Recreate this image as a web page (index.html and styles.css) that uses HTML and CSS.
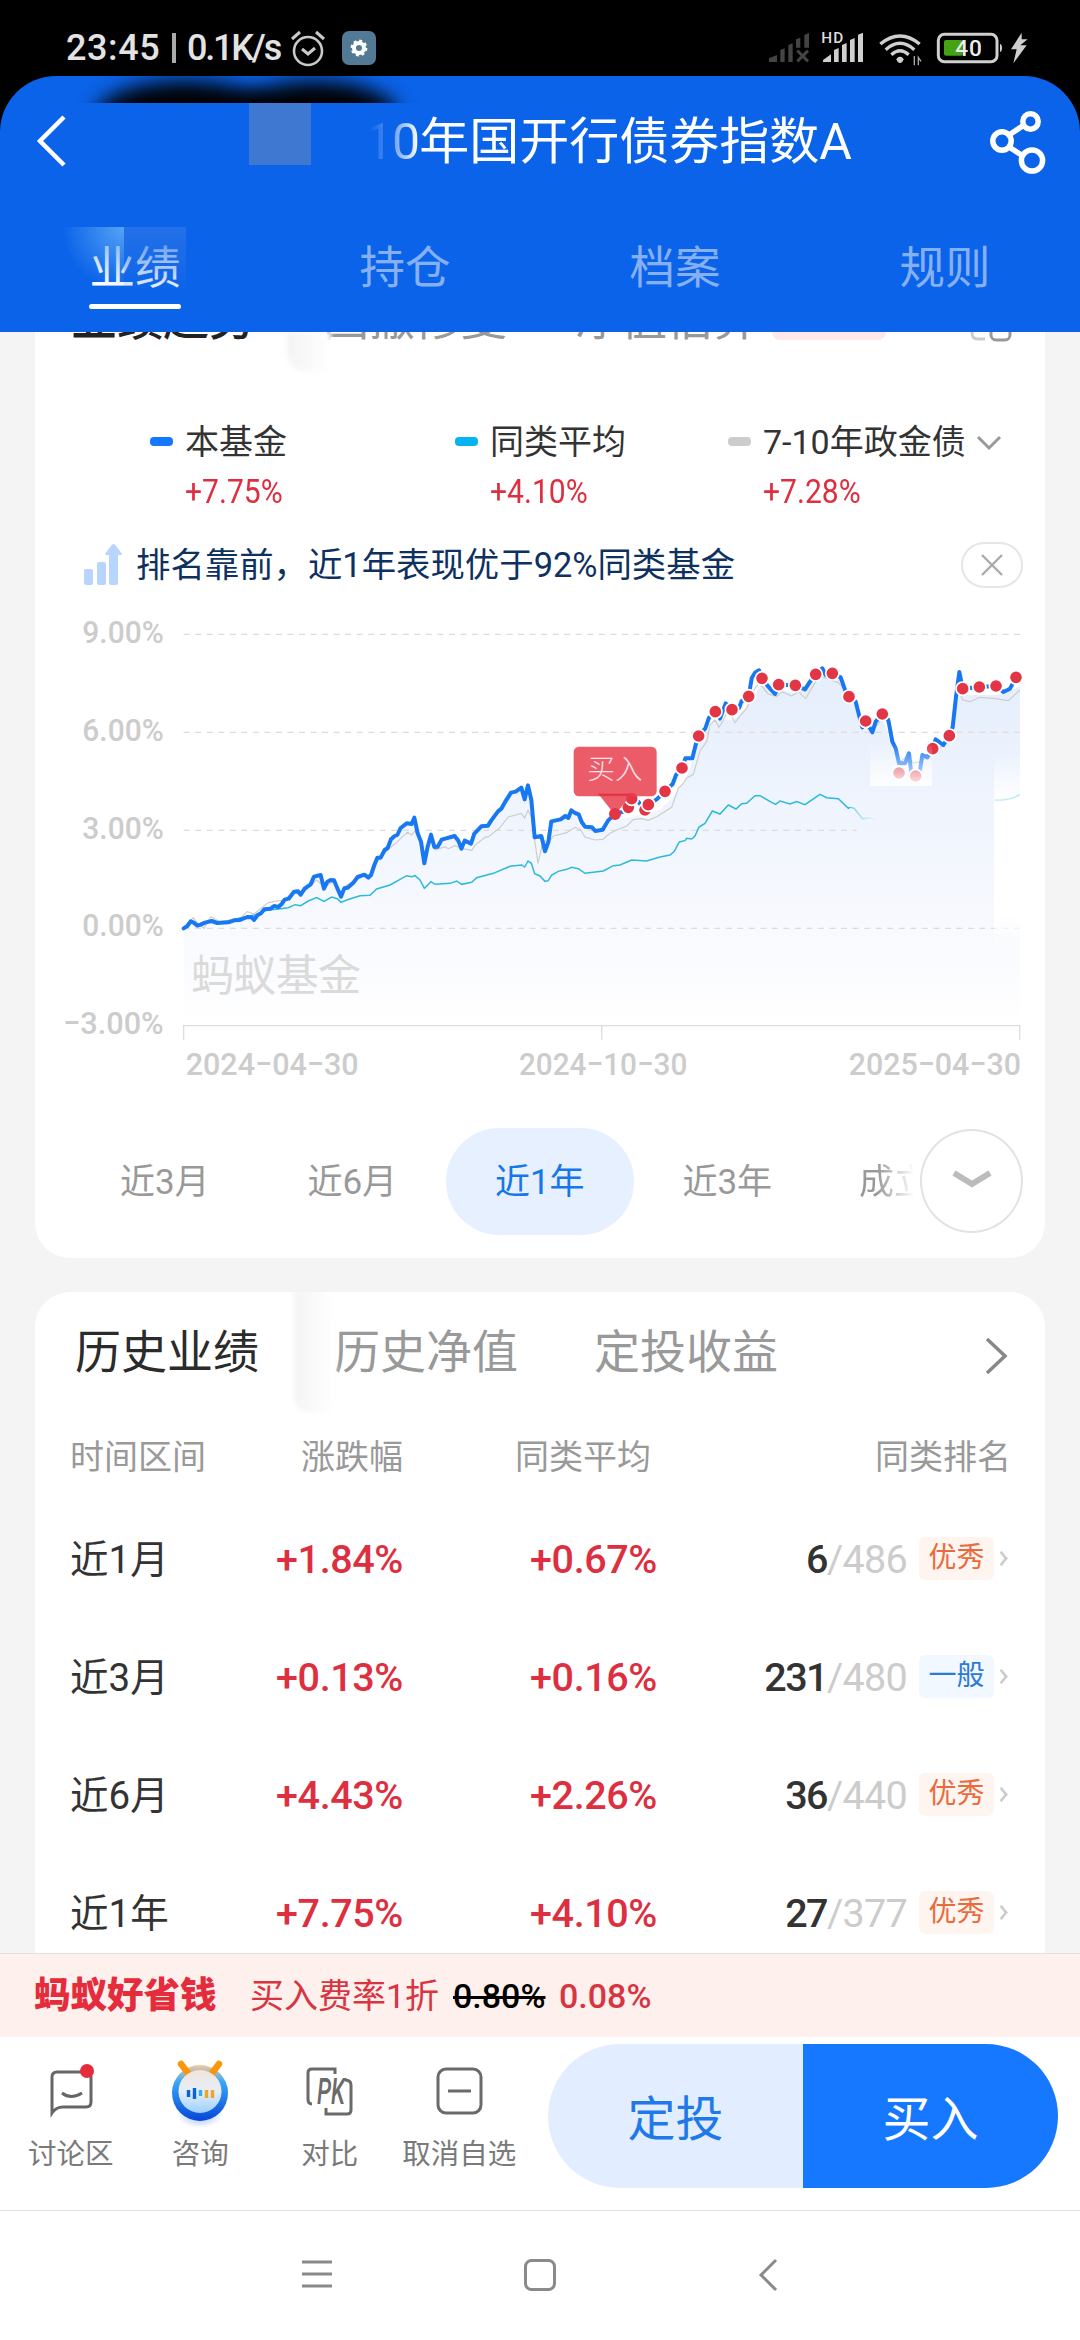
FILE: index.html
```html
<!DOCTYPE html>
<html lang="zh-CN">
<head>
<meta charset="utf-8">
<title>基金业绩</title>
<link rel="stylesheet" href="styles.css">
</head>
<body>
<div class="phone">
  <div class="status">
    <span class="clock">23:45</span><span class="bar"></span><span class="speed">0.1K/s</span>
    <svg class="alarm" width="36" height="38" viewBox="0 0 36 38" fill="none" stroke="#c9c9c9" stroke-width="2.6"><circle cx="18" cy="21" r="14"/><path d="M12 19l6 5 7-6M2 9l8-7M34 9l-8-7" stroke-width="3"/></svg>
    <svg class="gear" width="34" height="34" viewBox="0 0 34 34"><rect width="34" height="34" rx="7" fill="#527a94"/><circle cx="17" cy="17" r="5" fill="none" stroke="#fff" stroke-width="4"/><circle cx="17" cy="17" r="7.2" fill="none" stroke="#fff" stroke-width="2.4" stroke-dasharray="2.9 2.75"/></svg>
    <svg class="signals" width="280" height="46" viewBox="0 0 840 138">
      <g fill="#444"><path d="M48 115l24-10v21H48zM82 90l13-5v41H82zM106 75l13-5v56h-13zM129 58l13-5v30h-13zM154 45l14-6v44h-14z"/><path d="M133 92l32 32M165 92l-32 32" stroke="#444" stroke-width="9"/></g>
      <g fill="#cfcfcf"><path d="M210 120l24-17v23h-24zM243 90l14-6v42h-14zM267 75l14-6v57h-14zM291 60l14-6v72h-14zM315 44l15-6v88h-15z"/><path d="M429 118l12-8 12 8-12 12z"/><circle cx="441" cy="119" r="9"/></g>
      <text x="205" y="68" class="hd" textLength="66">HD</text>
      <g fill="none" stroke="#cfcfcf" stroke-width="10"><path d="M382 72q59-48 118 0M398 89q43-38 86 0M415 104q26-24 52 0"/></g>
      <path d="M484 108v28M496 136v-24l8 12" stroke="#aaa" stroke-width="4" fill="none"/>
      <rect x="556" y="43" width="176" height="82" rx="18" fill="none" stroke="#cfcfcf" stroke-width="9"/>
      <rect x="573" y="60" width="56" height="47" rx="6" fill="#45a215"/>
      <path d="M741 72q6 1 6 12t-6 12z" fill="#cfcfcf"/>
      <text x="607" y="107" class="batt" textLength="80">40</text>
      <path d="M806 38l-32 50h17l-10 42 40-54h-19l22-18h-18z" fill="#cfcfcf"/>
    </svg>
  </div>

  <header class="header">
    <div class="smear"><i></i><i></i></div>
    <i class="block"></i>
    <div class="titlebar">
      <svg class="back" width="34" height="52" viewBox="0 0 34 52" fill="none" stroke="#fff" stroke-width="4.5"><path d="M30 2L6 26l24 24"/></svg>
      <h1><span class="fade">10</span>年国开行债券指数A</h1>
      <svg class="share" width="60" height="66" viewBox="0 0 60 66" fill="none" stroke="#fff" stroke-width="5.5"><circle cx="42.500" cy="11.500" r="7.700"/><circle cx="14" cy="31" r="9.200"/><circle cx="44" cy="50.500" r="10.600"/><path d="M21 25l15-10M21 37l14 9"/></svg>
    </div>
    <nav class="tabs">
      <a class="on">业绩</a><a class="half">持仓</a><a>档案</a><a>规则</a>
    </nav>
    <i class="patch"></i>
  </header>

  <main class="content">
    <section class="card trend">
      <div class="cut"><b>业绩趋势</b><span>回撤修复</span><span>净值估算</span><i></i>
        <svg width="46" height="30" viewBox="0 0 46 30" fill="none" stroke-width="3"><path d="M4 2v19q0 6 6 6h7" stroke="#ccc"/><rect x="23" y="5" width="19" height="23" rx="5" stroke="#999"/></svg>
      </div>
      <div class="smudge"></div>
      <div class="legend">
        <div class="item"><i class="blue"></i><span>本基金</span><em>+7.75%</em></div>
        <div class="item"><i class="cyan"></i><span>同类平均</span><em>+4.10%</em></div>
        <div class="item"><i class="grey"></i><span>7-10年政金债<svg width="26" height="16" viewBox="0 0 26 16" fill="none" stroke="#999" stroke-width="3"><path d="M2 2l11 11L24 2"/></svg></span><em>+7.28%</em></div>
      </div>
      <div class="notice">
        <svg width="40" height="42" viewBox="0 0 40 42" fill="#b7d5ff"><rect x="1" y="25" width="9" height="16" rx="2"/><rect x="14" y="18" width="9" height="23" rx="2"/><path d="M31 0q1 0 8 10 0 1-1 1h-3v28q0 2-2 2h-5q-2 0-2-2V11h-3q-1 0-1-1 7-10 8-10z"/></svg>
        <p>排名靠前，近1年表现优于92%同类基金</p>
        <span class="close"><svg width="22" height="22" viewBox="0 0 22 22" stroke="#aaa" stroke-width="2.4"><path d="M1 1l20 20M21 1L1 21"/></svg></span>
      </div>
      <svg class="chart" viewBox="-375 -60 3030 1440">
        <defs>
          <linearGradient id="area" x1="0" y1="150" x2="0" y2="1217" gradientUnits="userSpaceOnUse"><stop offset="0" stop-color="#e5eefd"/><stop offset=".3" stop-color="#edf3fd"/><stop offset=".7" stop-color="#f7f9fe"/><stop offset="1" stop-color="#fff"/></linearGradient>
          <linearGradient id="cyanfade" x1="2030" x2="2150" y1="0" y2="0" gradientUnits="userSpaceOnUse"><stop offset="0" stop-color="#2bb9dc"/><stop offset="1" stop-color="#2bb9dc" stop-opacity="0"/></linearGradient>
          <linearGradient id="haze" x1="0" y1="0" x2="0" y2="1"><stop offset="0" stop-color="#fff" stop-opacity="0"/><stop offset=".55" stop-color="#fff" stop-opacity=".5"/><stop offset="1" stop-color="#fff" stop-opacity=".9"/></linearGradient>
          <linearGradient id="edge" x1="0" y1="0" x2="0" y2="1"><stop offset="0" stop-color="#fff" stop-opacity="0"/><stop offset=".25" stop-color="#fff"/><stop offset=".8" stop-color="#fff"/><stop offset="1" stop-color="#fff" stop-opacity="0"/></linearGradient>
        </defs>
        <path fill="url(#area)" d="M71 925 92 904 112 917 155 903 205 907 262 891 303 880 365 852 402 815 462 770 482 765 492 806 522 781 543 830 613 764 633 765 652 713 693 658 740 610 763 593 793 730 813 644 833 680 884 648 904 686 933 671 964 619 1014 574 1053 518 1104 496 1124 652 1155 694 1174 604 1234 571 1265 606 1306 633 1365 600 1420 590 1500 570 1540 530 1580 470 1616 370 1666 300 1720 300 1766 255 1806 190 1900 220 1985 165 2042 175 2117 320 2167 290 2217 440 2270 460 2300 410 2368 350 2398 200 2410 225 2510 225 2580 200V1217H71z"/>
        <g stroke="#dcdcdc" stroke-width="3.500" stroke-dasharray="18 16.600"><path d="M71 43H2580M71 337H2580M71 631H2090M71 925H2580"/></g>
        <path d="M71 1259V1217H2579V1259M1325 1217v42" fill="none" stroke="#ddd" stroke-width="4"/>
        <text x="93" y="1112" class="water" textLength="510">蚂蚁基金</text>
        <g class="axis">
          <text x="-233" y="69" textLength="244" lengthAdjust="spacingAndGlyphs">9.00%</text>
          <text x="-233" y="362" textLength="244" lengthAdjust="spacingAndGlyphs">6.00%</text>
          <text x="-233" y="656" textLength="244" lengthAdjust="spacingAndGlyphs">3.00%</text>
          <text x="-233" y="949" textLength="244" lengthAdjust="spacingAndGlyphs">0.00%</text>
          <text x="-291" y="1243" textLength="302" lengthAdjust="spacingAndGlyphs">−3.00%</text>
          <text x="77" y="1365" textLength="519" lengthAdjust="spacingAndGlyphs">2024−04−30</text>
          <text x="1077" y="1365" textLength="505" lengthAdjust="spacingAndGlyphs">2024−10−30</text>
          <text x="2066" y="1365" textLength="517" lengthAdjust="spacingAndGlyphs">2025−04−30</text>
        </g>
        <polyline class="line-grey" points="71,925 100,893 115,912 132,925 152,890 180,905 240,895 262,875 282,882 325,848 370,840 402,818 422,824 470,780 492,800 520,785 543,820 560,795 610,768 633,765 655,716 683,690 712,665 742,637 755,645 765,632 783,668 793,720 805,680 815,660 825,690 855,680 865,686 885,677 905,685 935,691 945,676 975,652 985,650 1020,623 1045,591 1084,580 1094,594 1104,571 1114,590 1124,660 1134,730 1150,660 1165,670 1180,648 1220,638 1245,622 1262,630 1275,651 1305,660 1328,658 1350,640 1375,628 1400,618 1420,599 1445,596 1465,601 1490,590 1535,562 1555,505 1570,490 1580,474 1600,463 1620,393 1640,365 1650,315 1665,300 1677,322 1690,300 1705,270 1725,308 1745,282 1760,265 1785,205 1798,190 1825,222 1850,230 1865,215 1895,228 1915,215 1937,236 1970,180 1985,170 2035,188 2060,215 2090,250 2105,325 2120,310 2137,335 2170,290 2190,320 2215,430 2245,405 2260,430 2280,425 2300,415 2350,375 2372,345 2395,200 2408,240 2430,245 2460,232 2500,235 2545,242 2580,210"/>
        <polyline class="line-cyan" points="225,897 260,890 290,884 320,870 350,868 385,863 405,854 422,857 445,843 470,833 492,844 515,831 532,836 543,847 560,840 600,827 630,826 650,807 690,795 740,767 755,770 765,767 780,780 793,805 813,785 825,793 870,790 890,783 905,793 935,787 950,773 1000,760 1050,739 1085,735 1094,741 1104,723 1114,730 1124,761 1140,768 1155,784 1165,782 1175,765 1195,754 1220,748 1235,742 1255,746 1275,760 1330,753 1360,737 1380,735 1415,720 1460,723 1500,711 1530,705 1543,694 1558,666 1575,662 1580,655 1595,657 1605,648 1617,621 1635,610 1657,573 1680,582 1705,555 1728,567 1745,551 1760,550 1785,527 1800,527 1835,547 1847,553 1860,543 1890,552 1910,545 1935,554 1980,523 2000,533 2035,536 2065,565 2070,562"/>
        <path d="M2070 562l12 2 26 33 20-4 20 7 20-10" stroke="url(#cyanfade)" stroke-width="4" fill="none"/>
        <polyline class="line-blue" points="71,925 82,918 92,904 101,908 112,917 122,914 135,908 155,903 172,909 205,907 222,901 240,900 262,891 275,892 282,900 292,886 303,880 313,868 332,866 342,858 355,861 365,852 374,839 386,836 402,815 414,814 422,824 434,806 452,793 462,770 482,765 492,806 502,785 512,780 522,781 532,805 543,830 553,805 563,803 580,788 593,771 613,764 625,773 633,765 643,735 652,713 662,713 674,690 683,684 693,658 704,648 712,645 722,624 740,610 755,612 763,593 773,640 783,665 793,730 803,680 813,644 823,681 833,680 845,659 884,648 895,662 904,686 914,662 933,671 943,641 964,619 984,617 994,601 1014,574 1024,566 1034,548 1053,518 1067,515 1084,503 1094,538 1104,496 1114,540 1124,652 1144,648 1155,694 1165,666 1174,604 1202,598 1216,588 1225,594 1234,571 1245,579 1256,583 1265,606 1275,620 1296,622 1306,633 1328,629 1344,602 1365,582 1390,575 1405,562 1415,536 1435,545 1455,570 1465,554 1490,538 1515,514 1538,492 1548,465 1566,444 1576,415 1597,415 1607,375 1616,348 1636,325 1647,293 1666,275 1680,296 1697,250 1716,269 1737,265 1745,243 1757,240 1766,229 1775,175 1785,158 1797,151 1806,175 1825,200 1845,222 1856,194 1906,196 1935,208 1950,185 1967,163 1987,145 1997,165 2017,160 2042,172 2057,215 2067,230 2087,245 2097,285 2107,322 2117,303 2137,337 2147,305 2167,282 2185,300 2197,365 2207,385 2217,430 2235,430 2247,400 2255,468 2280,450 2287,405 2302,412 2318,386 2327,358 2350,375 2368,347 2378,322 2388,230 2398,156 2408,206 2458,201 2508,198 2530,216 2550,206 2568,172"/>
        <g class="buys"><circle cx="1405" cy="562" r="20"/><circle cx="1415" cy="536" r="20"/><circle cx="1455" cy="570" r="20"/><circle cx="1465" cy="554" r="20"/><circle cx="1515" cy="514" r="20"/><circle cx="1566" cy="444" r="20"/><circle cx="1616" cy="348" r="20"/><circle cx="1666" cy="275" r="20"/><circle cx="1716" cy="269" r="20"/><circle cx="1766" cy="229" r="20"/><circle cx="1806" cy="175" r="20"/><circle cx="1856" cy="194" r="20"/><circle cx="1906" cy="196" r="20"/><circle cx="1967" cy="163" r="20"/><circle cx="2017" cy="160" r="20"/><circle cx="2067" cy="230" r="20"/><circle cx="2117" cy="303" r="20"/><circle cx="2167" cy="282" r="20"/><circle cx="2217" cy="459" r="20"/><circle cx="2267" cy="468" r="20"/><circle cx="2318" cy="386" r="20"/><circle cx="2368" cy="347" r="20"/><circle cx="2408" cy="206" r="20"/><circle cx="2458" cy="201" r="20"/><circle cx="2508" cy="198" r="20"/><circle cx="2568" cy="172" r="20"/></g>
        <path fill="url(#haze)" d="M2130 370h186v128h-186z"/>
        <path fill="url(#edge)" d="M2502 400h80v600h-80z"/>
        <path d="M2505 540q45 3 75-17" stroke="#2bb9dc" stroke-opacity=".3" stroke-width="4" fill="none"/>
        <g fill="#e8404f" fill-opacity=".86"><rect x="1241" y="380" width="249" height="149" rx="16"/><path d="M1316 523h98l-49 62z"/></g>
        <circle class="first" cx="1365" cy="582" r="18"/>
        <path d="M1316 524h96" stroke="#e23040" stroke-width="5"/>
        <text x="1282" y="476" class="flag" textLength="166">买入</text>
      </svg>
      <div class="ranges">
        <a>近3月</a><a>近6月</a><a class="on">近1年</a><a>近3年</a><a class="dim">成立</a>
        <span class="more"><svg width="40" height="22" viewBox="0 0 40 22" fill="none" stroke="#bbb" stroke-width="6"><path d="M2 3l18 11L38 3"/></svg></span>
      </div>
    </section>

    <section class="card history">
      <div class="smudge tall"></div>
      <div class="heads"><b>历史业绩</b><span>历史净值</span><span>定投收益</span>
        <svg width="24" height="38" viewBox="0 0 24 38" fill="none" stroke="#888" stroke-width="3.500"><path d="M2 2l18 17L2 36"/></svg></div>
      <div class="row th"><span>时间区间</span><span>涨跌幅</span><span>同类平均</span><span>同类排名</span></div>
      <div class="row"><b>近1月</b><em>+1.84%</em><em>+0.67%</em><div class="rank"><strong>6</strong><s>/486</s><i>优秀</i><u></u></div></div>
      <div class="row"><b>近3月</b><em>+0.13%</em><em>+0.16%</em><div class="rank"><strong>231</strong><s>/480</s><i class="mid">一般</i><u></u></div></div>
      <div class="row"><b>近6月</b><em>+4.43%</em><em>+2.26%</em><div class="rank"><strong>36</strong><s>/440</s><i>优秀</i><u></u></div></div>
      <div class="row"><b>近1年</b><em>+7.75%</em><em>+4.10%</em><div class="rank"><strong>27</strong><s>/377</s><i>优秀</i><u></u></div></div>
    </section>
  </main>

  <div class="promo"><b>蚂蚁好省钱</b><span>买入费率1折</span><del>0.80%</del><em>0.08%</em></div>

  <footer class="actions">
    <div class="act"><svg width="60" height="70" viewBox="0 0 60 70" fill="none" stroke="#666" stroke-width="3"><path d="M11 56V20q0-5 5-5h29q5 0 5 5v25q0 5-5 5H22q-7 0-11 6zM21 36q9 7 20 0"/><circle cx="46" cy="14" r="7" fill="#e52c3c" stroke="none"/></svg><span>讨论区</span></div>
    <div class="act"><svg width="60" height="70" viewBox="0 0 60 70">
      <defs><linearGradient id="ring" x1="0" y1="0" x2="0" y2="1"><stop offset="0" stop-color="#f7c89a"/><stop offset=".3" stop-color="#38a8f5"/><stop offset="1" stop-color="#0645d8"/></linearGradient><linearGradient id="face" x1="0" y1="0" x2="0" y2="1"><stop offset="0" stop-color="#f3e5da"/><stop offset=".5" stop-color="#e4eefa"/><stop offset="1" stop-color="#9bd0ff"/></linearGradient><radialGradient id="glow"><stop offset="0" stop-color="#9bb8ff"/><stop offset="1" stop-color="#fff"/></radialGradient></defs>
      <ellipse cx="30" cy="58" rx="23" ry="13" fill="url(#glow)"/><circle cx="30" cy="36" r="28" fill="url(#ring)"/><path d="M11 7l7 9M49 7l-7 9" stroke="#f8960f" stroke-width="6.500" stroke-linecap="round"/>
      <circle cx="30" cy="34.500" r="21.500" fill="url(#face)"/><g stroke-width="3.400"><path d="M18.500 33v7M24.500 31v11" stroke="#0b62dc"/><path d="M30.500 33v6" stroke="#35aee8"/><path d="M36.500 33v8M42.500 33v8" stroke="#f4a322"/></g></svg><span>咨询</span></div>
    <div class="act"><svg width="60" height="70" viewBox="0 0 60 70" fill="none" stroke="#6a6a6a" stroke-width="3"><path d="M35 17v-5H12q-4 0-4 4v26q0 5 4 5M45 23q6 0 6 5v25q0 4-4 4H26v-6"/><text x="17" y="47" class="pk" textLength="28" lengthAdjust="spacingAndGlyphs">PK</text></svg><span>对比</span></div>
    <div class="act"><svg width="60" height="70" viewBox="0 0 60 70" fill="none" stroke="#6a6a6a" stroke-width="3"><rect x="9" y="12" width="43" height="44" rx="8"/><path d="M19 34h23"/></svg><span>取消自选</span></div>
    <div class="cta"><button>定投</button><button class="buy">买入</button></div>
  </footer>

  <div class="sysnav">
    <svg width="32" height="32" viewBox="0 0 32 32" stroke="#8a8a8a" stroke-width="3"><path d="M1 4h30M1 16h30M1 28h30"/></svg>
    <svg width="34" height="34" viewBox="0 0 34 34" fill="none" stroke="#8a8a8a" stroke-width="3"><rect x="2.500" y="2.500" width="29" height="29" rx="6"/></svg>
    <svg width="22" height="34" viewBox="0 0 22 34" fill="none" stroke="#8a8a8a" stroke-width="3"><path d="M19 2L4 17l15 15"/></svg>
  </div>
</div>
</body>
</html>
```
FILE: styles.css
```css
* { box-sizing: border-box; margin: 0; padding: 0; }
body { width: 1080px; height: 2340px; overflow: hidden; background: #000; font-family: Roboto, "Noto Sans CJK SC", sans-serif; color: #333; }
svg { display: block; flex: none; }
em, i { font-style: normal; }
.phone { width: 1080px; height: 2340px; display: flex; flex-direction: column; }

.status { height: 76px; display: flex; align-items: center; padding: 20px 0 0 66px; color: #e3e3e3; font-size: 36px; line-height: 56px; }
.clock { width: 96px; font-weight: 500; letter-spacing: .6px; }
.bar { width: 4px; height: 30px; margin: 0 11px 0 10px; background: #aaa; }
.speed { width: 96px; font-weight: 500; letter-spacing: -2.200px; white-space: nowrap; }
.alarm { margin: 2px 0 0 7px; }
.gear { margin-left: 16px; }
.signals { margin: -10px 0 0 377px; }
.hd { font-size: 46px; font-weight: 500; fill: #ddd; }
.batt { font-size: 68px; font-weight: 500; fill: #eee; }

.header { position: relative; height: 256px; background: #0b63e9; border-radius: 56px 56px 0 0; overflow: hidden; flex: none; }
.smear { position: absolute; left: 60px; top: 0; width: 380px; height: 27px; overflow: hidden; }
.smear i { position: absolute; top: 5px; left: 36px; width: 180px; height: 70px; border-radius: 50%; background: #000; filter: blur(10px); }
.smear i + i { left: 172px; width: 166px; }
.block { position: absolute; left: 249px; top: 27px; width: 62px; height: 62px; background: #3e78d0; }
.titlebar { display: flex; align-items: center; height: 130px; padding: 0 32px 0 34px; }
h1 { flex: 1; margin: 2px 0 0 297px; color: #fff; font-size: 50px; line-height: 60px; font-weight: 400; white-space: nowrap; }
.fade { letter-spacing: -1px; background: linear-gradient(90deg, rgba(255,255,255,0) 8%, rgba(255,255,255,.3) 45%, #fff); -webkit-background-clip: text; background-clip: text; color: transparent; }
.share { margin: 4px 0 0; }
.tabs { display: flex; }
.tabs a { width: 270px; height: 103px; display: flex; flex-direction: column; align-items: center; color: rgba(255,255,255,.5); font-size: 45.500px; line-height: 64px; padding-top: 31px; }
.tabs .on { color: #fff; }
.tabs .on::after { content: ""; flex: none; width: 92px; height: 5px; margin-top: 3px; border-radius: 3px; background: #fff; }
.patch { position: absolute; left: 62px; top: 151px; width: 124px; height: 62px; background: linear-gradient(180deg, rgba(38,114,232,.9), rgba(38,114,232,.1)) right/62px 62px no-repeat, radial-gradient(circle at 100% 0, #55a2f5 0, rgba(85,162,245,0) 62px) left/62px 62px no-repeat; }

.content { height: 1621px; padding: 0 35px; background: #f4f4f4; overflow: hidden; flex: none; }
.card { position: relative; background: #fff; border-radius: 0 0 35px 35px; overflow: hidden; }
.trend { height: 926px; }
.cut { display: flex; height: 10px; align-items: flex-end; padding-left: 36px; font-size: 46px; line-height: 54px; color: #999; white-space: nowrap; }
.cut b { width: 252px; color: #222; font-weight: 500; }
.cut span { width: 252px; }
.cut span + span { width: 198px; }
.cut span, .cut b { margin-bottom: -4px; flex: none; }
.cut i { width: 114px; height: 20px; margin: 0 82px 2px -1px; flex: none; border-radius: 8px; background: #fde8ea; }
.smudge { position: absolute; left: 252px; top: 0; width: 44px; height: 40px; background: linear-gradient(90deg, #f4f4f4, #fff); border-radius: 0 0 0 20px; filter: blur(2px); }
.smudge.tall { left: 259px; top: -4px; width: 42px; height: 124px; border-radius: 0 24px 0 14px; background: linear-gradient(90deg, #f5f5f5, #fff); }

.legend { display: flex; padding: 76px 0 0 115px; height: 198px; }
.item { display: grid; grid-template-columns: 35px auto; align-content: start; width: 305px; font-size: 34px; line-height: 49px; white-space: nowrap; }
.item:nth-child(2) { width: 273px; }
.item > i { width: 23px; height: 9px; margin-top: 19px; border-radius: 4px; background: #1677ff; }
.item > i.cyan { background: #08b3f2; }
.item > i.grey { background: #ccc; }
.item span { display: flex; align-items: center; }
.item span svg { margin-left: 10px; }
.item em { grid-column: 2; justify-self: start; color: #dd2f3f; transform: scaleX(.885); transform-origin: left; }

.notice { display: flex; align-items: center; height: 50px; padding: 0 22px 0 48px; }
.notice p { flex: 1; margin-left: 13px; font-size: 34.400px; line-height: 50px; color: #0e3161; white-space: nowrap; }
.close { width: 62px; height: 46px; border: 2px solid #e6e6e6; border-radius: 23px; display: flex; align-items: center; justify-content: center; }

.chart { width: 1010px; height: 480px; margin-top: 10px; }
.axis text { font-size: 96px; font-weight: 500; fill: #ccc; }
.water { font-size: 129px; fill: #dadada; font-weight: 400; }
.flag { font-size: 83px; fill: #ffe2e5; font-weight: 300; }
.line-grey { fill: none; stroke: #ccc; stroke-width: 3.500; }
.line-cyan { fill: none; stroke: #2bb9dc; stroke-width: 4.500; }
.line-blue { fill: none; stroke: #1878f3; stroke-width: 12; stroke-linejoin: round; stroke-linecap: round; }
.buys circle { fill: #e23545; stroke: #fff; stroke-width: 5; }
.first { fill: #e23545; }

.ranges { display: flex; height: 107px; margin-top: 48px; padding-left: 36px; position: relative; }
.ranges a { width: 187.500px; padding-top: 2px; text-align: center; font-size: 35px; line-height: 105px; color: #999; flex: none; }
.ranges .on { background: #e6f0ff; color: #1677e8; border-radius: 54px; }
.ranges .dim { width: 60px; margin-left: 38px; text-align: left; overflow: hidden; white-space: nowrap; background: linear-gradient(90deg, #999 30%, #fff 92%); -webkit-background-clip: text; background-clip: text; color: transparent; }
.more { position: absolute; left: 885px; top: 1px; width: 103px; height: 104px; border: 2px solid #e2e2e2; border-radius: 50%; background: #fff; display: flex; align-items: center; justify-content: center; }

.history { margin-top: 34px; height: 700px; border-radius: 35px 35px 0 0; }
.heads { display: flex; align-items: center; height: 126px; padding: 0 36px 4px 40px; font-size: 46px; line-height: 54px; color: #999; white-space: nowrap; }
.heads b { width: 259px; font-weight: 400; color: #2b2b2b; }
.heads b, .heads span { margin-top: -2px; }
.heads span { width: 260px; }
.heads svg { margin: 6px 0 0 auto; }
.row { display: grid; grid-template-columns: 153px 180px 254px 1fr; align-items: center; height: 118px; padding: 6px 34px 0 35px; font-size: 38.500px; line-height: 50px; white-space: nowrap; }
.row b { font-weight: 400; }
.row em { text-align: right; font-size: 39.500px; font-weight: 500; color: #dd2f3f; letter-spacing: -.4px; }
.th { height: 80px; padding-top: 0; padding-bottom: 2px; font-size: 34px; color: #999; }
.th span + span { text-align: right; }
.th span:nth-child(3) { padding-right: 6px; }
.rank { display: flex; align-items: center; justify-content: flex-end; }
.rank strong, .rank s { font-size: 39.500px; font-weight: 500; text-decoration: none; letter-spacing: -1.600px; }
.rank s { font-weight: 400; color: #ccc; letter-spacing: -.7px; }
.rank i { width: 75px; height: 43px; margin: -4px 2px 0 12px; border-radius: 6px; background: #fff5f0; color: #ea6a3c; font-size: 28px; line-height: 41px; text-align: center; }
.rank .mid { background: #f2f8ff; color: #2c7ad8; }
.rank u { width: 11px; height: 11px; margin: -4px 4px 0 0; border: solid #ccc; border-width: 3px 3px 0 0; transform: scaleX(.8) rotate(45deg); }

.promo { height: 84px; display: flex; align-items: center; flex: none; padding-left: 34px; background: #fef0ed; border-top: 1px solid #e2dedd; font-size: 34px; line-height: 50px; color: #d93441; white-space: nowrap; }
.promo b { width: 216px; font-size: 36.500px; font-weight: 900; color: #e52c3c; }
.promo span { width: 203px; }
.promo del { width: 106px; color: #000; font-weight: 500; text-decoration-thickness: 3px; }
.promo em { font-weight: 500; }

.actions { display: flex; height: 173px; background: #fff; flex: none; padding-left: 6px; }
.act { width: 129.500px; display: flex; flex-direction: column; align-items: center; padding-top: 20px; font-size: 28.500px; line-height: 40px; color: #7a7a7a; white-space: nowrap; }
.act span { margin-top: 8px; }
.pk { font: italic 500 37px Roboto, sans-serif; fill: #6a6a6a; stroke: none; }
.cta { display: flex; width: 510px; height: 144px; margin: 7px 0 0 24px; border-radius: 72px; overflow: hidden; }
.cta button { width: 255px; padding-bottom: 3px; border: 0; background: #e2eeff; color: #1f79e8; font: 400 48px Roboto, "Noto Sans CJK SC", sans-serif; }
.cta .buy { background: #1677ff; color: #fff; }

.sysnav { flex: 1; display: flex; padding: 47px 0 0 301px; background: #fff; border-top: 1px solid #e0e0e0; }
.sysnav svg + svg { margin-left: 190px; }
.sysnav svg + svg + svg { margin-left: 200px; }
```
